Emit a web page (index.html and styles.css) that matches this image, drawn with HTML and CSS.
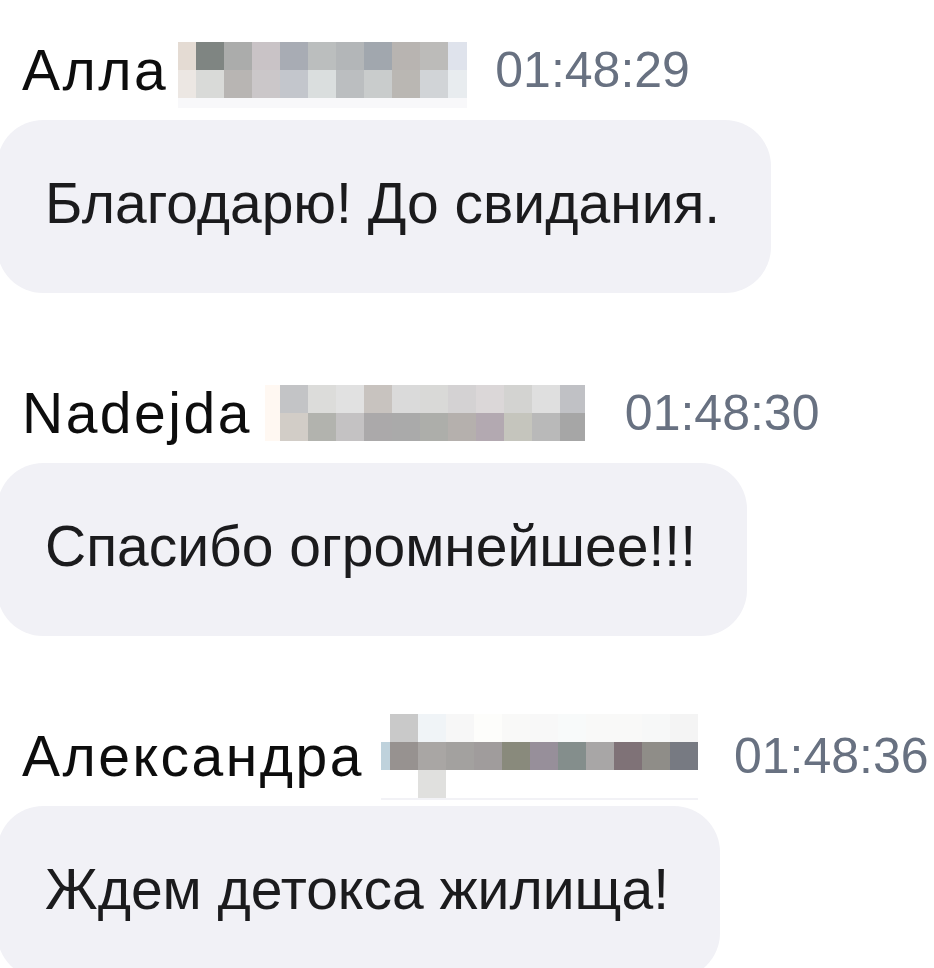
FILE: index.html
```html
<!DOCTYPE html>
<html lang="ru">
<head>
    <meta charset="UTF-8">
    <title>Чат</title>
    <link rel="stylesheet" href="styles.css">
</head>
<body>
    <main class="chat">
        <div class="msg">
            <div class="msg-head">
                <span class="author">Алла</span>
                <span class="mosaic" data-id="0"></span>
                <span class="time">01:48:29</span>
            </div>
            <div class="bubble">Благодарю! До свидания.</div>
        </div>

        <div class="msg">
            <div class="msg-head">
                <span class="author">Nadejda</span>
                <span class="mosaic" data-id="1"></span>
                <span class="time">01:48:30</span>
            </div>
            <div class="bubble">Спасибо огромнейшее!!!</div>
        </div>

        <div class="msg">
            <div class="msg-head">
                <span class="author">Александра</span>
                <span class="mosaic" data-id="2"></span>
                <span class="time">01:48:36</span>
            </div>
            <div class="bubble">Ждем детокса жилища!</div>
        </div>
    </main>

    <script>
        // blurred phone numbers next to the names
        const mosaics = [
            {
                cols: [18, 28, 28, 28, 28, 28, 28, 28, 28, 28, 19],
                after: 28,
                rows: [
                    ['#e4dbd3', '#7f8582', '#abacab', '#c9c3c6', '#a8acb4', '#bbbebe', '#b3b6b8', '#a1a7ae', '#b8b4b1', '#bcbbb9', '#dfe3ec'],
                    ['#ece7e3', '#d9dad8', '#b8b5b3', '#cbc7c9', '#c3c6cc', '#dadede', '#bbbec0', '#c9cccc', '#bab7b3', '#d1d4d7', '#e8ecef']
                ]
            },
            {
                cols: [15, 28, 28, 28, 28, 28, 28, 28, 28, 28, 28, 25],
                after: 40,
                rows: [
                    ['#fff8f2', '#c3c4c6', '#dcdcda', '#e1e1e1', '#c8c3bf', '#dadada', '#d9d9d7', '#d4d2d3', '#dbd7d8', '#d3d3d1', '#dfdfdf', '#c0c1c5'],
                    ['#fff8f2', '#d2cdc7', '#b2b3ae', '#c4c2c3', '#aba9aa', '#aaaaaa', '#adaeaa', '#b5b0ad', '#b3a9b1', '#c5c5bd', '#b9b9b9', '#a6a6a6']
                ]
            },
            {
                cols: [9, 28, 28, 28, 28, 28, 28, 28, 28, 28, 28, 28],
                after: 36,
                rows: [
                    ['#ffffff', '#c9c9c9', '#f0f4f7', '#f7f7f7', '#fdfdfb', '#f9f9f8', '#f8f8f8', '#f8fafa', '#f9f9f8', '#f9f9f8', '#f7f8f8', '#f4f4f4'],
                    ['#bfd2dc', '#979290', '#a9a6a4', '#a3a19f', '#a09c9c', '#898a7c', '#978f9a', '#848e8c', '#a8a6a6', '#7f7277', '#8f8d88', '#777a82'],
                    ['#ffffff', '#ffffff', '#e0e0de', '#ffffff', '#ffffff', '#ffffff', '#ffffff', '#ffffff', '#ffffff', '#ffffff', '#ffffff', '#ffffff']
                ]
            }
        ];

        document.querySelectorAll('.mosaic').forEach(el => {
            const m = mosaics[el.dataset.id];
            el.style.gridTemplateColumns = m.cols.map(w => w + 'px').join(' ');
            el.style.marginRight = m.after + 'px';
            m.rows.forEach(row => {
                row.forEach(color => {
                    const cell = document.createElement('i');
                    cell.style.background = color;
                    el.appendChild(cell);
                });
            });
        });
    </script>
</body>
</html>
```

FILE: styles.css
```css
body {
    margin: 0;
    background-color: #ffffff;
    font-family: 'Liberation Sans', Arial, sans-serif;
    color: #1b1b1d;
    overflow: hidden;
}

.chat {
    padding: 38px 0 0 22px;
}

.msg {
    margin-bottom: 88px;
}

.msg-head {
    display: flex;
    align-items: center;
    height: 64px;
    margin-bottom: 18px;
}

.author {
    font-size: 57px;
    line-height: 64px;
    letter-spacing: 2.5px;
    color: #0d0d0d;
    margin-right: 13px;
    white-space: nowrap;
}

.author:first-letter {
    letter-spacing: 2.5px;
}

.mosaic {
    display: grid;
    grid-auto-rows: 28px;
    flex-shrink: 0;
}

.mosaic i {
    display: block;
}

.mosaic[data-id="0"] {
    margin-left: -3px;
    box-shadow: 0 10px 0 #f8f8fa;
}

.mosaic[data-id="2"] {
    margin-left: 4px;
    box-shadow: 0 2px 0 #f2f2f6;
}

.time {
    font-size: 50px;
    line-height: 64px;
    color: #687181;
    white-space: nowrap;
}

.bubble {
    display: inline-block;
    margin-left: -25px;
    padding: 51px 51px 58px 48px;
    background-color: #f1f1f6;
    border-radius: 46px;
    font-size: 57px;
    line-height: 64px;
    white-space: nowrap;
}
```
